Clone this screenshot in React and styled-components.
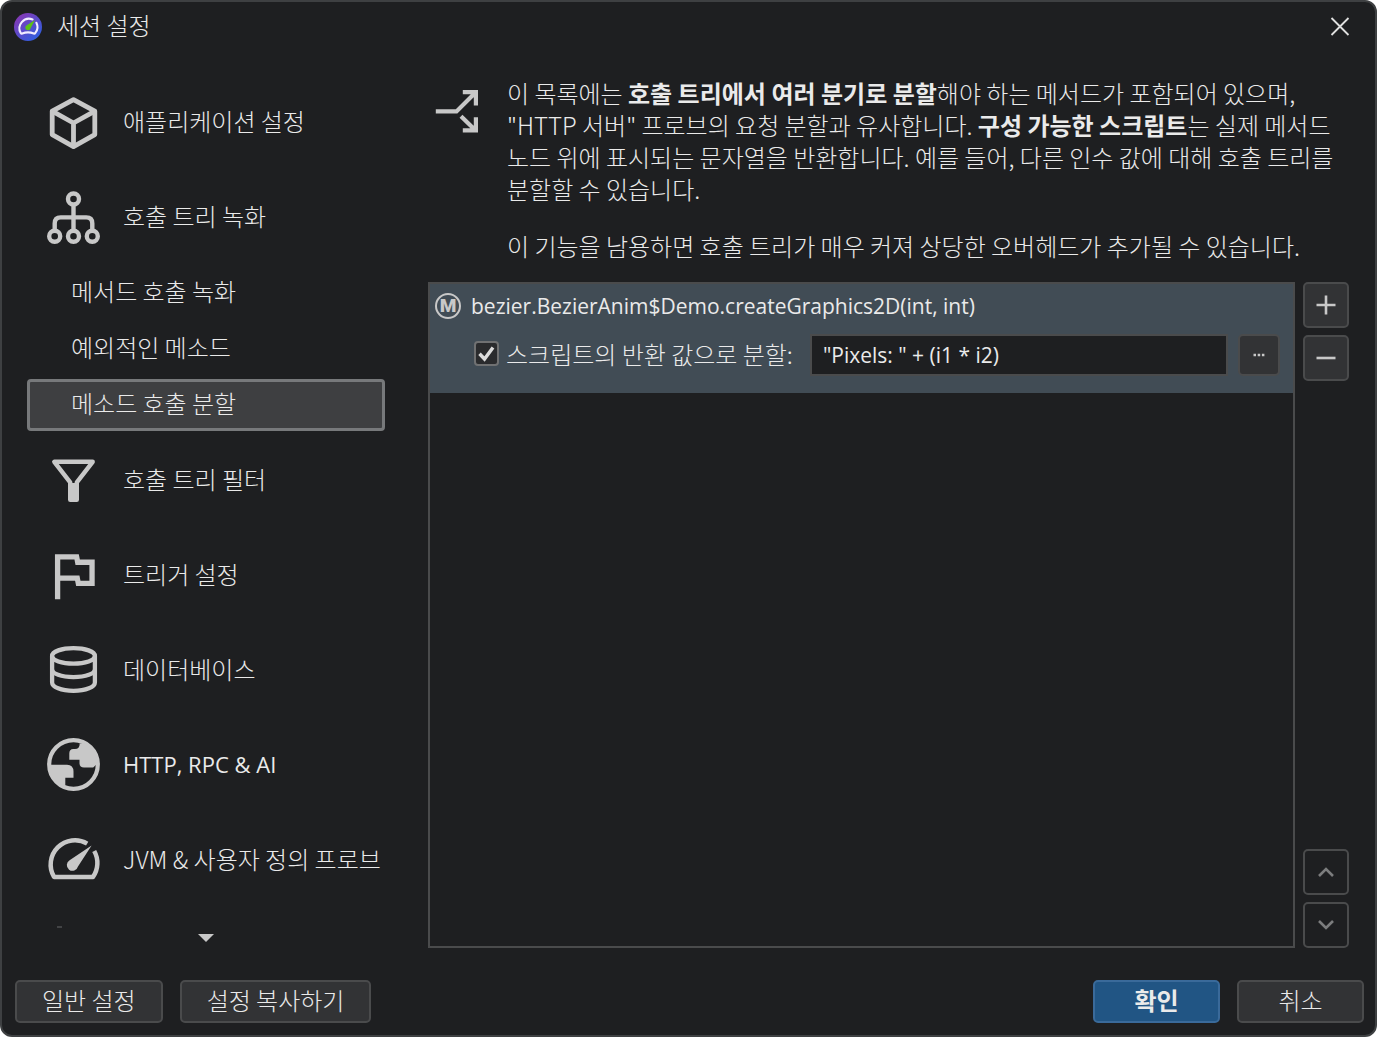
import React, { useState } from 'react';
import styled, { ThemeProvider, createGlobalStyle } from 'styled-components';

const theme = {
  background: '#1e1f21',
  raised: '#323335',
  border: '#4a4b4c',
  text: '#eaeaea',
  icon: '#c8c8c8',
  selection: '#414c55',
  primary: '#215584',
  uiFont: '"Noto Sans CJK KR", sans-serif',
  latinFont: '"Open Sans", "Noto Sans CJK KR", sans-serif'
};

const GlobalStyle = createGlobalStyle`
  * {
    box-sizing: border-box;
  }
  body {
    margin: 0;
    background: white;
  }
  button, input {
    font: inherit;
    color: inherit;
  }
`;

const Dialog = styled.div`
  display: flex;
  flex-direction: column;
  height: 100vh;
  border: 2px solid #3e4042;
  border-radius: 12px;
  background: ${props => props.theme.background};
  color: ${props => props.theme.text};
  font-family: ${props => props.theme.uiFont};
  font-size: 24px;
  font-weight: 300;
  line-height: 32px;
`;

const TitleBar = styled.header`
  display: flex;
  align-items: center;
  gap: 15px;
  height: 50px;
  padding: 0 25px 0 12px;
`;

const Title = styled.h1`
  flex: 1;
  margin: 0;
  padding-bottom: 4px;
  font-size: 24px;
  font-weight: 300;
`;

const CloseButton = styled.button`
  display: flex;
  padding: 0;
  border: none;
  background: none;
`;

const Body = styled.div`
  display: flex;
  flex: 1;
  gap: 43px;
  min-height: 0;
  padding: 0 25px;
`;

const Sidebar = styled.nav`
  display: flex;
  flex-direction: column;
  flex: 0 0 358px;
  padding-top: 23px;
`;

const NavList = styled.div`
  flex: 1;
  min-height: 0;
  overflow: hidden;
`;

const NavItem = styled.a`
  display: flex;
  align-items: center;
  gap: 23px;
  height: 95px;
  padding-left: 20px;
  color: inherit;
  text-decoration: none;
  white-space: nowrap;
`;

const NavLabel = styled.span`
  padding-bottom: 4px;
  ${props =>
    props.$latin &&
    `
    font-family: ${props.theme.latinFont};
    font-size: 22px;
    font-weight: 400;
  `}
`;

const NavSubItem = styled.a`
  display: flex;
  align-items: center;
  height: 56px;
  padding: 0 0 4px 44px;
  color: inherit;
  text-decoration: none;
`;

const SelectedSubItem = styled(NavSubItem)`
  height: 52px;
  margin: 2px 0;
  padding-left: 41px;
  border: 3px solid #77797b;
  border-radius: 4px;
  background: #3e3f41;
`;

const ScrollDown = styled.button`
  display: flex;
  align-items: center;
  justify-content: center;
  height: 20px;
  padding: 0;
  border: none;
  background: none;
`;

const Content = styled.main`
  display: flex;
  flex: 1;
  flex-direction: column;
  min-width: 0;
`;

const Description = styled.section`
  display: flex;
  align-items: flex-start;
  gap: 27px;
  padding: 25px 7px 20px;
  word-break: keep-all;
  svg {
    flex: none;
    margin-top: 12px;
  }
  p {
    margin: 0 0 25px;
  }
  p:last-child {
    margin-bottom: 0;
  }
  strong {
    font-weight: 700;
  }
`;

const Editor = styled.section`
  display: flex;
  flex: 1;
  gap: 8px;
  min-height: 0;
`;

const MethodList = styled.div`
  flex: 1;
  min-width: 0;
  border: 2px solid ${props => props.theme.border};
`;

const MethodRow = styled.div`
  padding: 2px 13px 17px 5px;
  background: ${props => props.theme.selection};
`;

const MethodName = styled.div`
  display: flex;
  align-items: center;
  gap: 10px;
  height: 40px;
  font-family: ${props => props.theme.latinFont};
  font-size: 21px;
  font-weight: 400;
`;

const MethodBadge = styled.span`
  display: flex;
  align-items: center;
  justify-content: center;
  width: 26px;
  height: 26px;
  border: 2px solid ${props => props.theme.icon};
  border-radius: 50%;
  color: ${props => props.theme.icon};
  font-family: Roboto, sans-serif;
  font-size: 19px;
  font-weight: 900;
`;

const ScriptLine = styled.div`
  display: flex;
  align-items: center;
  gap: 10px;
  padding: 8px 0 0 39px;
`;

const CheckLabel = styled.label`
  display: flex;
  align-items: center;
  gap: 7px;
  margin-right: 7px;
  padding-bottom: 3px;
  white-space: nowrap;
`;

const CheckBox = styled.span`
  display: grid;
  width: 25px;
  height: 25px;
  > * {
    grid-area: 1 / 1;
  }
  svg {
    visibility: ${props => (props.$checked ? 'visible' : 'hidden')};
    pointer-events: none;
  }
`;

const CheckInput = styled.input`
  width: 25px;
  height: 25px;
  margin: 0;
  appearance: none;
  border: 2px solid #707172;
  border-radius: 4px;
  background: #2a2b2d;
`;

const ScriptInput = styled.input`
  flex: 1;
  min-width: 0;
  height: 42px;
  padding: 0 11px;
  border: 2px solid ${props => props.theme.border};
  background: ${props => props.theme.background};
  font-family: ${props => props.theme.latinFont};
  font-size: 21px;
  font-weight: 400;
`;

const IconButton = styled.button`
  display: flex;
  align-items: center;
  justify-content: center;
  width: ${props => props.$size || 46}px;
  height: ${props => props.$size || 46}px;
  padding: 0;
  border: 2px solid ${props => props.theme.border};
  border-radius: 5px;
  background: ${props => props.theme.raised};
  &:disabled {
    background: none;
  }
`;

const ButtonColumn = styled.div`
  display: flex;
  flex-direction: column;
  gap: 7px;
  margin-right: 1px;
`;

const Spacer = styled.div`
  flex: 1;
`;

const Footer = styled.footer`
  display: flex;
  gap: 17px;
  padding: 32px 11px 12px 13px;
`;

const Button = styled.button`
  min-width: 127px;
  height: 43px;
  padding: 0 25px 3px;
  border: 2px solid ${props => (props.$primary ? '#3a6a9a' : props.theme.border)};
  border-radius: 5px;
  background: ${props => (props.$primary ? props.theme.primary : props.theme.raised)};
  font-weight: ${props => (props.$primary ? 700 : 300)};
`;

const Svg = ({ size = 53, width, height, box, children }) => (
  <svg
    width={width || size}
    height={height || size}
    viewBox={box || `0 0 ${width || size} ${height || size}`}
    fill="none"
    stroke={theme.icon}
    aria-hidden="true"
  >
    {children}
  </svg>
);

const LogoIcon = () => (
  <Svg size={28}>
    <defs>
      <linearGradient id="logo" x1="0.1" y1="0.1" x2="0.8" y2="0.95">
        <stop offset="0" stopColor="#8738b4" />
        <stop offset="1" stopColor="#2f5ee0" />
      </linearGradient>
    </defs>
    <circle cx="14" cy="14" r="14" fill="url(#logo)" stroke="none" />
    <path
      d="M18.6 6.4A9.6 9.6 0 0 0 6.8 20.2Q7.3 20.9 8.2 20.5Q14 18.2 19.8 20.5Q20.7 20.9 21.2 20.2A9.6 9.6 0 0 0 22.4 9.8"
      stroke="#f1edff"
      strokeWidth="2.1"
      strokeLinecap="round"
    />
    <path d="M21 7L16.6 15.2A2.7 2.7 0 1 1 12.4 12.4Z" fill="#5cc016" stroke="none" />
  </Svg>
);

const CubeIcon = () => (
  <Svg>
    <g strokeWidth="4.8" strokeLinejoin="round">
      <path d="M26.5 3.6L47.8 15.2V38.6L26.5 50.6L5.2 38.6V15.2Z" />
      <path d="M5.2 15.2L26.5 27L47.8 15.2M26.5 27V50.6" />
    </g>
  </Svg>
);

const TreeIcon = () => (
  <Svg>
    <g strokeWidth="4.4">
      <circle cx="26.5" cy="8" r="5.5" />
      <circle cx="7.7" cy="45.2" r="5.5" />
      <circle cx="26.5" cy="45.2" r="5.5" />
      <circle cx="45.3" cy="45.2" r="5.5" />
      <path d="M26.5 13V39.5M7.7 39.5V32.4Q7.7 26.4 13.7 26.4H39.3Q45.3 26.4 45.3 32.4V39.5" />
    </g>
  </Svg>
);

const FilterIcon = () => (
  <Svg>
    <path d="M7.3 7.8H45.7L29.8 28.4V45.8H23.2V28.4Z" strokeWidth="4.4" strokeLinejoin="round" />
    <path d="M23 29H30V46H23Z" fill={theme.icon} stroke="none" />
  </Svg>
);

const FlagIcon = () => (
  <Svg box="2 2 20 20">
    <path
      d="M12.36 6l.4 2H18v6h-3.36l-.4-2H7V6h5.36M14 4H5v17h2v-7h5.6l.4 2h7V6h-5.6L14 4z"
      fill={theme.icon}
      stroke="none"
    />
  </Svg>
);

const DatabaseIcon = () => (
  <Svg>
    <g strokeWidth="4.3">
      <ellipse cx="26.5" cy="11.9" rx="21.4" ry="7.8" />
      <path d="M5.1 11.9V38.4C5.1 42.8 14 46.8 26.5 46.8S47.9 42.8 47.9 38.4V11.9" />
      <path d="M5.1 25.4C5.1 29.4 14 33.1 26.5 33.1S47.9 29.4 47.9 25.4" />
    </g>
  </Svg>
);

const GlobeIcon = () => (
  <Svg width={53} height={55}>
    <circle cx="26.5" cy="26.5" r="24.3" strokeWidth="4.2" />
    <g fill={theme.icon} stroke="none">
      <path d="M32.6 5.4Q33 10.8 28 11H26.3Q22.3 11.2 22.3 15.2V21.8H32.5V25.4Q32.7 29.4 37 29.6H46.2L49.4 26.4L50 17L41 6Z" />
      <path d="M3 26.8H20Q26.4 27.2 26.5 33.4V39.7H18.3V50L8 44L2 34Z" />
    </g>
  </Svg>
);

const GaugeIcon = () => (
  <Svg box="0 1 53 53">
    <g strokeWidth="4.5" strokeLinejoin="round">
      <path d="M40.2 10.6A24.3 24.3 0 0 0 7 43.9H46A24.3 24.3 0 0 0 47.2 18" />
      <path d="M44.6 12.4L31 33.6A5.7 5.7 0 1 1 22.6 27.2Z" fill={theme.icon} stroke="none" />
    </g>
  </Svg>
);

const SplitIcon = () => (
  <Svg width={45} height={45}>
    <path
      d="M.8 22.4H21.5L41 3M27.8 3.2H40.9V16.4M26 27.2L40.6 41.5M27.8 41.3H40.9V28.2"
      strokeWidth="4.2"
    />
  </Svg>
);

// Only the upper edge of this one shows above the scroll arrow.
const ScriptIcon = () => (
  <Svg width={53} height={60}>
    <path d="M10 1H15" stroke="#66686a" strokeWidth="1" />
  </Svg>
);

const sections = [
  { label: '애플리케이션 설정', icon: CubeIcon },
  {
    label: '호출 트리 녹화',
    icon: TreeIcon,
    children: ['메서드 호출 녹화', '예외적인 메소드', '메소드 호출 분할']
  },
  { label: '호출 트리 필터', icon: FilterIcon },
  { label: '트리거 설정', icon: FlagIcon },
  { label: '데이터베이스', icon: DatabaseIcon },
  { label: 'HTTP, RPC & AI', icon: GlobeIcon, latin: true },
  { label: 'JVM & 사용자 정의 프로브', icon: GaugeIcon },
  { label: '', icon: ScriptIcon }
];

const selected = '메소드 호출 분할';

const NavSection = ({ label, icon: Icon, latin, children = [] }) => (
  <>
    <NavItem href="#">
      <Icon />
      <NavLabel $latin={latin}>{label}</NavLabel>
    </NavItem>
    {children.map(child => {
      const Item = child === selected ? SelectedSubItem : NavSubItem;
      return (
        <Item href="#" key={child}>
          {child}
        </Item>
      );
    })}
  </>
);

const SplitMethod = () => {
  const [checked, setChecked] = useState(true);
  const [script, setScript] = useState('"Pixels: " + (i1 * i2)');

  return (
    <MethodRow>
      <MethodName>
        <MethodBadge>M</MethodBadge>
        bezier.BezierAnim$Demo.createGraphics2D(int, int)
      </MethodName>
      <ScriptLine>
        <CheckLabel>
          <CheckBox $checked={checked}>
            <CheckInput
              type="checkbox"
              checked={checked}
              onChange={e => setChecked(e.target.checked)}
            />
            <Svg size={25}>
              <path d="M5.5 12.8L10.5 18L19 6.5" strokeWidth="3.4" stroke="#dcdcdc" />
            </Svg>
          </CheckBox>
          스크립트의 반환 값으로 분할:
        </CheckLabel>
        <ScriptInput
          aria-label="스크립트"
          value={script}
          onChange={e => setScript(e.target.value)}
        />
        <IconButton $size={42} aria-label="편집">
          <Svg width={12} height={4}>
            <path d="M.5 2H3M4.7 2H7.2M8.9 2H11.4" strokeWidth="2.4" />
          </Svg>
        </IconButton>
      </ScriptLine>
    </MethodRow>
  );
};

const App = () => (
  <ThemeProvider theme={theme}>
    <GlobalStyle />
    <Dialog>
      <TitleBar>
        <LogoIcon />
        <Title>세션 설정</Title>
        <CloseButton aria-label="닫기">
          <Svg size={20}>
            <path d="M1.5 1L18.5 18M18.5 1L1.5 18" stroke="#e0e0e0" strokeWidth="1.8" />
          </Svg>
        </CloseButton>
      </TitleBar>
      <Body>
        <Sidebar>
          <NavList>
            {sections.map(section => (
              <NavSection key={section.label} {...section} />
            ))}
          </NavList>
          <ScrollDown aria-label="아래로">
            <Svg width={16} height={8}>
              <path d="M0 0H16L8 8Z" fill={theme.icon} stroke="none" />
            </Svg>
          </ScrollDown>
        </Sidebar>
        <Content>
          <Description>
            <SplitIcon />
            <div>
              <p>
                이 목록에는 <strong>호출 트리에서 여러 분기로 분할</strong>해야 하는 메서드가
                포함되어 있으며, "HTTP 서버" 프로브의 요청 분할과 유사합니다.{' '}
                <strong>구성 가능한 스크립트</strong>는 실제 메서드 노드 위에 표시되는 문자열을
                반환합니다. 예를 들어, 다른 인수 값에 대해 호출 트리를 분할할 수 있습니다.
              </p>
              <p>
                이 기능을 남용하면 호출 트리가 매우 커져 상당한 오버헤드가 추가될 수 있습니다.
              </p>
            </div>
          </Description>
          <Editor>
            <MethodList>
              <SplitMethod />
            </MethodList>
            <ButtonColumn>
              <IconButton aria-label="추가">
                <Svg size={20}>
                  <path d="M10 .5V19.5M.5 10H19.5" strokeWidth="2.6" />
                </Svg>
              </IconButton>
              <IconButton aria-label="제거">
                <Svg size={20}>
                  <path d="M.5 10H19.5" strokeWidth="2.6" />
                </Svg>
              </IconButton>
              <Spacer />
              <IconButton aria-label="위로 이동" disabled>
                <Svg width={16} height={10}>
                  <path d="M1 9L8 2L15 9" stroke="#7c7d7e" strokeWidth="2.6" />
                </Svg>
              </IconButton>
              <IconButton aria-label="아래로 이동" disabled>
                <Svg width={16} height={10}>
                  <path d="M1 1L8 8L15 1" stroke="#7c7d7e" strokeWidth="2.6" />
                </Svg>
              </IconButton>
            </ButtonColumn>
          </Editor>
        </Content>
      </Body>
      <Footer>
        <Button>일반 설정</Button>
        <Button>설정 복사하기</Button>
        <Spacer />
        <Button $primary>확인</Button>
        <Button>취소</Button>
      </Footer>
    </Dialog>
  </ThemeProvider>
);

export default App;
